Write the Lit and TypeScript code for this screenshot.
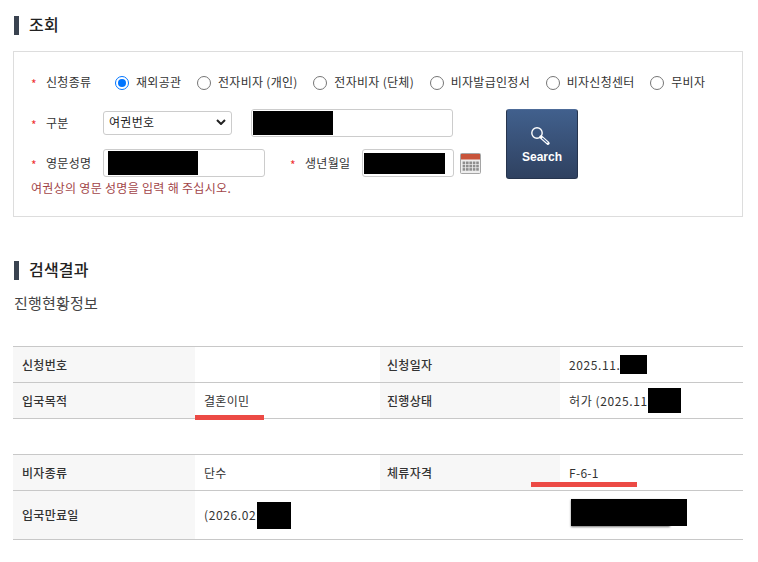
import { LitElement, html, css, svg } from "lit";
import { customElement } from "lit/decorators.js";

@customElement("app-root")
export class AppRoot extends LitElement {
  static styles = css`
    :host { display: block; width: 758px; height: 562px; overflow: hidden; background: #fff; color: #333; font: 12px/18px "Noto Sans CJK KR", "Noto Sans", sans-serif; letter-spacing: 0.3px; position: relative; box-sizing: border-box; padding: 16px 15px 0 13px; }
    * { box-sizing: border-box; }
    h2 { margin: 0; display: flex; align-items: center; gap: 10px; height: 19px; padding-left: 1px; font-size: 16px; font-weight: 500; color: #222; letter-spacing: 0.2px; }
    h2::before { content: ""; width: 5px; height: 19px; background: #3a4350; }
    h2 span { position: relative; top: -2px; }
    .box { margin-top: 16px; height: 166px; border: 1px solid #ddd; padding: 18px 17px 0 17px; position: relative; }
    .row { display: flex; align-items: center; }
    .req { color: #e33; width: 15px; font-size: 12px; padding-top: 4px; }
    .lab { width: 57px; }
    .r1 { height: 24px; }
    .radios { display: flex; align-items: center; margin-left: 12px; }
    .rad { display: flex; align-items: center; gap: 7px; margin-right: 15.6px; white-space: nowrap; }
    .dot { width: 14px; height: 14px; border-radius: 50%; border: 1px solid #767676; background: #fff; margin-top: 1px; }
    .dot.on { border: 1.5px solid #0075ff; display: flex; align-items: center; justify-content: center; }
    .dot.on::after { content: ""; width: 8px; height: 8px; border-radius: 50%; background: #0075ff; }
    .main { display: flex; margin-top: 15px; }
    .form { width: 459px; flex: none; }
    .r2 { height: 28px; }
    .r3 { height: 28px; margin-top: 12px; }
    .sel { width: 129px; height: 24px; border: 1px solid #ccc; border-radius: 3px; display: flex; align-items: center; justify-content: space-between; padding: 0 5px 2px 5px; color: #222; }
    .inp { height: 28px; border: 1px solid #ccc; border-radius: 3px; background: #fff; display: flex; align-items: center; }
    .i1 { width: 202px; margin-left: 19px; padding-left: 1px; }
    .i2 { width: 162px; padding-left: 4px; }
    .i3 { width: 92px; padding-left: 1px; }
    .black { background: #000; display: block; flex: none; }
    .k1 { width: 80px; height: 24px; }
    .k2 { width: 90px; height: 24px; }
    .k3 { width: 81px; height: 21px; }
    .lab2 { width: 57px; }
    .req2 { margin-left: 25px; }
    .cal { margin-left: 6px; margin-top: 1px; display: block; flex: none; }
    .hint { color: #a24548; margin-top: 3px; line-height: 16px; }
    .btn { margin-left: 16px; flex: none; width: 72px; height: 70px; border-radius: 3px; border: 1px solid #26344d; border-top-color: #4d6b98; background: linear-gradient(#41608d, #2f4160); color: #fff; display: flex; flex-direction: column; align-items: center; padding-top: 14px; font-weight: 700; font-family: "Liberation Sans", sans-serif; font-size: 12px; letter-spacing: 0; line-height: 16px; }
    .btn svg { display: block; margin-bottom: 1px; }
    .h2b { margin-top: 44px; }
    .sub { margin: 13px 0 0 1px; font-size: 15px; line-height: 20px; color: #444; letter-spacing: 0.2px; }
    .grid { display: grid; grid-template-columns: 182px 185px 180px 183px; border-top: 1px solid #c8c8c8; }
    .c { border-bottom: 1px solid #c8c8c8; display: flex; align-items: center; padding-left: 9px; color: #333; white-space: nowrap; }
    .num { letter-spacing: 0.6px; }
    .th { background: #f7f7f7; font-weight: 500; padding-left: 9px; }
    .g1 { margin-top: 33px; grid-auto-rows: 36px; }
    .g2 { margin-top: 35px; grid-template-rows: 36px 49px; }
    .th3 { padding-left: 7px; }
    .k4 { width: 27px; height: 19px; }
    .k5 { width: 33px; height: 25px; }
    .k6 { width: 34px; height: 27px; margin-left: 1px; }
    .k7 { width: 116px; height: 27px; margin: 0 0 5px 2px; position: relative; }
    .k7::before { content: ""; position: absolute; left: 0; top: 0; width: 99px; height: 27px; box-shadow: 0 1px 2px rgba(0,0,0,.55); }
    .line { position: absolute; background: #ec4a45; height: 5px; }
    .l1 { left: 195px; top: 415px; width: 69px; }
    .l2 { left: 531px; top: 482px; width: 106px; }
  `;

  private rad(label: string, on = false) {
    return html`<span class="rad"><span class="dot ${on ? "on" : ""}"></span>${label}</span>`;
  }

  render() {
    return html`
      <h2><span>조회</span></h2>
      <div class="box">
        <div class="row r1">
          <span class="req">*</span><span class="lab">신청종류</span>
          <div class="radios">
            ${this.rad("재외공관", true)}${this.rad("전자비자 (개인)")}${this.rad("전자비자 (단체)")}${this.rad("비자발급인정서")}${this.rad("비자신청센터")}${this.rad("무비자")}
          </div>
        </div>
        <div class="main">
          <div class="form">
            <div class="row r2">
              <span class="req">*</span><span class="lab">구분</span>
              <div class="sel">여권번호
                <svg width="10" height="6" viewBox="0 0 10 6"><path d="M1 1l4 4 4-4" fill="none" stroke="#222" stroke-width="2"/></svg>
              </div>
              <div class="inp i1"><span class="black k1"></span></div>
            </div>
            <div class="row r3">
              <span class="req">*</span><span class="lab">영문성명</span>
              <div class="inp i2"><span class="black k2"></span></div>
              <span class="req req2">*</span><span class="lab2">생년월일</span>
              <div class="inp i3"><span class="black k3"></span></div>
              <svg class="cal" width="21" height="21" viewBox="0 0 21 21">
                <rect x=".5" y=".5" width="20" height="20" rx="1" fill="#eee" stroke="#a5a5a5"/>
                <rect x="1" y="1" width="19" height="5.5" fill="#c8543a"/>
                ${[8.5, 11.8, 15.1].flatMap((y) => [2.6, 6, 9.4, 12.8, 16.2].map((x) => svg`<rect x=${x} y=${y} width="2.6" height="2.6" fill="#8e8e8e"/>`))}
              </svg>
            </div>
            <div class="hint">여권상의 영문 성명을 입력 해 주십시오.</div>
          </div>
          <div class="btn">
            <svg width="24" height="24" viewBox="0 0 24 24" fill="none"><circle cx="7" cy="9" r="5.2" stroke="#fff" stroke-width="1.4"/><path d="M11 13l7 6.2" stroke="#fff" stroke-width="3.4" stroke-linecap="round"/><path d="M12.5 14.3l4.6 4.1" stroke="#41608d" stroke-width="1.2" stroke-linecap="round"/></svg>
            Search
          </div>
        </div>
      </div>
      <h2 class="h2b"><span>검색결과</span></h2>
      <div class="sub">진행현황정보</div>
      <div class="grid g1">
        <div class="c th">신청번호</div><div class="c"></div>
        <div class="c th th3">신청일자</div><div class="c num">2025.11.<span class="black k4"></span></div>
        <div class="c th">입국목적</div><div class="c">결혼이민</div>
        <div class="c th th3">진행상태</div><div class="c num">허가 (2025.11<span class="black k5"></span></div>
      </div>
      <div class="grid g2">
        <div class="c th">비자종류</div><div class="c">단수</div>
        <div class="c th th3">체류자격</div><div class="c">F-6-1</div>
        <div class="c th">입국만료일</div><div class="c num">(2026.02<span class="black k6"></span></div>
        <div class="c"></div><div class="c"><span class="black k7"></span></div>
      </div>
      <div class="line l1"></div>
      <div class="line l2"></div>
    `;
  }
}
